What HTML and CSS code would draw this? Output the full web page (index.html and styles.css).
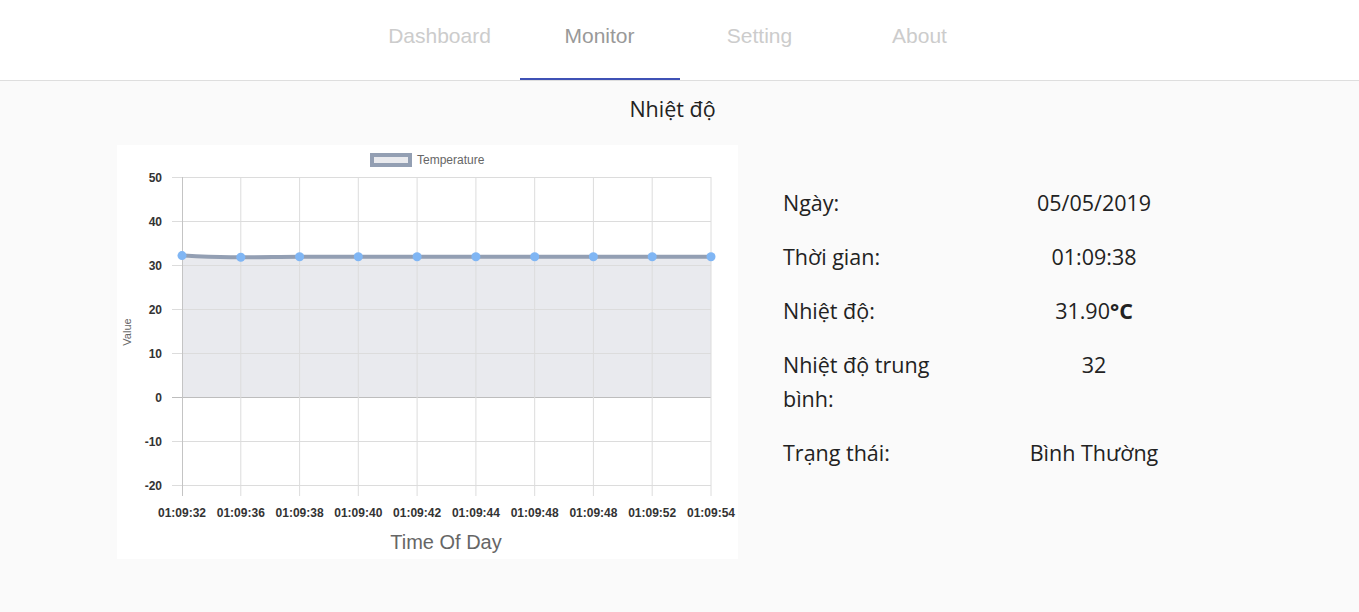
FILE: index.html
```html
<!DOCTYPE html>
<html lang="vi">
<head>
<meta charset="utf-8">
<title>Monitor</title>
<link rel="stylesheet" href="styles.css">
</head>
<body>
<nav class="nav">
  <a class="tab">Dashboard</a>
  <a class="tab active">Monitor</a>
  <a class="tab">Setting</a>
  <a class="tab">About</a>
</nav>
<main class="main">
  <h2 class="title">Nhiệt độ</h2>
  <div class="content">
    <div class="card">
      <svg class="chart" width="621" height="413" viewBox="0 0 621 413">
        <!-- legend -->
        <rect x="255" y="10" width="38" height="10" fill="#e9eaee" stroke="#939fb3" stroke-width="4"/>
        <text x="300" y="19" class="legend">Temperature</text>
        <!-- fill -->
        <path d="M65 110.6 C90 111.6 100 112.3 123.8 112.3 C150 112.3 160 111.8 182.6 111.8 L594 111.8 L594 252.7 L65 252.7 Z" fill="#e9eaee"/>
        <!-- horizontal grid -->
        <g stroke="#dcdcdc" stroke-width="1">
          <line x1="55" y1="32.5" x2="594" y2="32.5"/>
          <line x1="55" y1="76.5" x2="594" y2="76.5"/>
          <line x1="55" y1="120.5" x2="594" y2="120.5"/>
          <line x1="55" y1="164.5" x2="594" y2="164.5"/>
          <line x1="55" y1="208.5" x2="594" y2="208.5"/>
          <line x1="55" y1="296.5" x2="594" y2="296.5"/>
          <line x1="55" y1="340.5" x2="594" y2="340.5"/>
        </g>
        <line x1="55" y1="252.5" x2="594" y2="252.5" stroke="#bdbdbd" stroke-width="1"/>
        <!-- vertical grid -->
        <g stroke="#dcdcdc" stroke-width="1">
          <line x1="123.8" y1="32" x2="123.8" y2="351"/>
          <line x1="182.6" y1="32" x2="182.6" y2="351"/>
          <line x1="241.3" y1="32" x2="241.3" y2="351"/>
          <line x1="300.1" y1="32" x2="300.1" y2="351"/>
          <line x1="358.9" y1="32" x2="358.9" y2="351"/>
          <line x1="417.7" y1="32" x2="417.7" y2="351"/>
          <line x1="476.4" y1="32" x2="476.4" y2="351"/>
          <line x1="535.2" y1="32" x2="535.2" y2="351"/>
          <line x1="594" y1="32" x2="594" y2="351"/>
        </g>
        <line x1="65.5" y1="32" x2="65.5" y2="351" stroke="#c4c4c4" stroke-width="1"/>
        <!-- y labels -->
        <g class="tick" text-anchor="end">
          <text x="45" y="36.5">50</text>
          <text x="45" y="80.5">40</text>
          <text x="45" y="124.5">30</text>
          <text x="45" y="168.5">20</text>
          <text x="45" y="212.5">10</text>
          <text x="45" y="256.5">0</text>
          <text x="45" y="300.5">-10</text>
          <text x="45" y="345">-20</text>
        </g>
        <text class="axis-small" transform="translate(14 187) rotate(-90)" text-anchor="middle">Value</text>
        <!-- x labels -->
        <g class="tick" text-anchor="middle">
          <text x="65" y="372">01:09:32</text>
          <text x="123.8" y="372">01:09:36</text>
          <text x="182.6" y="372">01:09:38</text>
          <text x="241.3" y="372">01:09:40</text>
          <text x="300.1" y="372">01:09:42</text>
          <text x="358.9" y="372">01:09:44</text>
          <text x="417.7" y="372">01:09:48</text>
          <text x="476.4" y="372">01:09:48</text>
          <text x="535.2" y="372">01:09:52</text>
          <text x="594" y="372">01:09:54</text>
        </g>
        <text class="axis-big" x="329" y="404" text-anchor="middle">Time Of Day</text>
        <!-- line -->
        <path d="M65 110.6 C90 111.6 100 112.3 123.8 112.3 C150 112.3 160 111.8 182.6 111.8 L594 111.8" fill="none" stroke="#939fb3" stroke-width="4"/>
        <g fill="#80b6f4">
          <circle cx="65" cy="110.6" r="4.5"/>
          <circle cx="123.8" cy="112.3" r="4.5"/>
          <circle cx="182.6" cy="111.8" r="4.5"/>
          <circle cx="241.3" cy="111.8" r="4.5"/>
          <circle cx="300.1" cy="111.8" r="4.5"/>
          <circle cx="358.9" cy="111.8" r="4.5"/>
          <circle cx="417.7" cy="111.8" r="4.5"/>
          <circle cx="476.4" cy="111.8" r="4.5"/>
          <circle cx="535.2" cy="111.8" r="4.5"/>
          <circle cx="594" cy="111.8" r="4.5"/>
        </g>
      </svg>
    </div>
    <div class="info">
      <div class="row"><div class="label">Ngày:</div><div class="value">05/05/2019</div></div>
      <div class="row"><div class="label">Thời gian:</div><div class="value">01:09:38</div></div>
      <div class="row"><div class="label">Nhiệt độ:</div><div class="value">31.90<b>°C</b></div></div>
      <div class="row"><div class="label">Nhiệt độ trung bình:</div><div class="value">32</div></div>
      <div class="row"><div class="label">Trạng thái:</div><div class="value">Bình Thường</div></div>
    </div>
  </div>
</main>
</body>
</html>
```

FILE: styles.css
```css
html, body {
  margin: 0;
  padding: 0;
}
body {
  background: #fafafa;
  font-family: "Open Sans", "Noto Sans", sans-serif;
  color: #222;
  height: 612px;
  overflow: hidden;
}
.nav {
  height: 81px;
  background: #fff;
  border-bottom: 1px solid #dedede;
  display: flex;
  justify-content: center;
  box-sizing: border-box;
}
.tab {
  width: 160px;
  height: 80px;
  box-sizing: border-box;
  display: flex;
  justify-content: center;
  padding-top: 24px;
  font-family: "Liberation Sans", Arial, sans-serif;
  font-size: 21px;
  color: #cccccc;
  cursor: pointer;
}
.tab.active {
  color: #999999;
  border-bottom: 2px solid #3f51b5;
}
.main {
  padding-top: 13px;
}
.title {
  margin: 0;
  padding-right: 14px;
  text-align: center;
  font-weight: normal;
  font-size: 21.5px;
  line-height: 30px;
  color: #222;
}
.content {
  display: flex;
  padding-left: 117px;
  margin-top: 21px;
}
.card {
  width: 621px;
  height: 414px;
  background: #fff;
}
.chart {
  display: block;
  font-family: "Liberation Sans", Arial, sans-serif;
}
.tick {
  font-size: 12px;
  font-weight: bold;
  fill: #333;
}
.legend {
  font-size: 12px;
  fill: #666;
}
.axis-small {
  font-size: 11px;
  fill: #666;
}
.axis-big {
  font-size: 20px;
  fill: #666;
}
.info {
  margin-left: 45px;
  padding-top: 41px;
  display: flex;
  flex-direction: column;
  gap: 20px;
  font-size: 21.5px;
  line-height: 34px;
  color: #222;
}
.row {
  display: flex;
}
.label {
  width: 160px;
}
.value {
  width: 302px;
  text-align: center;
}
.value b {
  font-weight: bold;
}
```
